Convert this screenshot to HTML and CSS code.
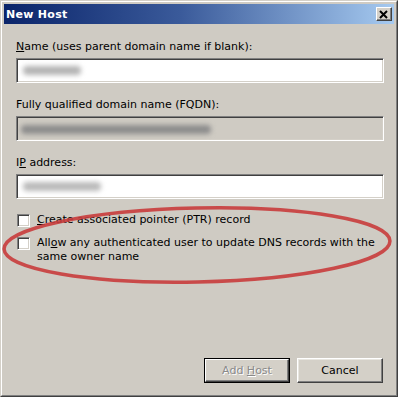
FILE: index.html
```html
<!DOCTYPE html>
<html>
<head>
<meta charset="utf-8">
<link rel="stylesheet" href="styles.css">
</head>
<body>
<div class="window">
  <div class="frame">
    <div class="titlebar">
      <span class="title">New Host</span>
      <span class="close">
        <svg width="10" height="9" viewBox="0 0 10 9"><path d="M1 1 L8 8 M8 1 L1 8" stroke="#000" stroke-width="2" fill="none"/></svg>
      </span>
    </div>
    <div class="content">
      <div class="label"><u>N</u>ame (uses parent domain name if blank):</div>
      <div class="input"><span class="blob blob1"></span></div>

      <div class="label">Fully qualified domain name (FQDN):</div>
      <div class="input disabled"><span class="blob blob2"></span></div>

      <div class="label">I<u>P</u> address:</div>
      <div class="input"><span class="blob blob3"></span></div>

      <div class="check-row first">
        <span class="checkbox"></span>
        <span class="check-label"><u>C</u>reate associated pointer (PTR) record</span>
      </div>
      <div class="check-row">
        <span class="checkbox"></span>
        <span class="check-label">All<u>o</u>w any authenticated user to update DNS records with the same owner name</span>
      </div>

      <div class="buttons">
        <span class="btn default"><span class="btn-inner dis"><span>Add <u>H</u>ost</span></span></span>
        <span class="btn"><span class="btn-inner"><span>Cancel</span></span></span>
      </div>
    </div>
  </div>
  <svg class="ellipse" width="400" height="400" viewBox="0 0 400 400">
    <ellipse cx="197" cy="245" rx="193" ry="37" transform="rotate(-1.2 197 245)" fill="none" stroke="#c83c3c" stroke-width="3.5" stroke-opacity="0.9"/>
  </svg>
</div>
</body>
</html>
```

FILE: styles.css
```css
* { box-sizing: border-box; }
html, body { margin: 0; padding: 0; background: #fff; }
body {
  font-family: "DejaVu Sans", Verdana, sans-serif;
  font-size: 11px;
  color: #000;
}
.window {
  position: relative;
  width: 398px;
  height: 397px;
  border: 1px solid;
  border-color: #d4d0c8 #404040 #404040 #d4d0c8;
  background: #d4d0c8;
}
.frame {
  height: 100%;
  border: 1px solid;
  border-color: #fff #808080 #808080 #fff;
  padding: 2px;
  display: flex;
  flex-direction: column;
  background: #cfcbc3;
}
.titlebar {
  height: 20px;
  background: linear-gradient(to right, #0a246a 0%, #3a5a9a 45%, #a6caf0 100%);
  display: flex;
  align-items: center;
  justify-content: space-between;
  padding: 0 2px 0 2px;
}
.title {
  color: #fff;
  font-weight: bold;
  font-size: 11px;
  letter-spacing: 0.3px;
}
.close {
  width: 16px;
  height: 14px;
  background: #d4d0c8;
  border: 1px solid;
  border-color: #fff #404040 #404040 #fff;
  box-shadow: inset -1px -1px #808080;
  display: flex;
  align-items: center;
  justify-content: center;
}
.content {
  flex: 1;
  display: flex;
  flex-direction: column;
  padding: 16px 10px 10px 12px;
}
.label {
  line-height: 14px;
  height: 14px;
  margin-bottom: 4px;
  white-space: nowrap;
}
.input {
  position: relative;
  height: 25px;
  width: 368px;
  background: #fff;
  border: 1px solid;
  border-color: #808080 #fff #fff #808080;
  box-shadow: inset 1px 1px #404040, inset -1px -1px #d4d0c8;
  margin-bottom: 15px;
}
.input.disabled { background: #cfcbc3; }
.blob {
  position: absolute;
  top: 7px;
  height: 9px;
  border-radius: 4px;
  filter: blur(2.5px);
  background: #9a9a9a;
}
.blob1 { left: 6px; width: 58px; background: #b4b4b4; }
.blob2 { left: 4px; width: 190px; top: 8px; background: #8c8c8c; }
.blob3 { left: 6px; width: 78px; background: #bababa; }

.check-row {
  display: flex;
  align-items: flex-start;
  gap: 7px;
  padding-left: 1px;
  line-height: 14px;
  margin-bottom: 9px;
}
.check-row.first { margin-top: -1px; }
.checkbox {
  flex: none;
  width: 13px;
  height: 13px;
  margin-top: 1px;
  background: #fff;
  border: 1px solid;
  border-color: #808080 #fff #fff #808080;
  box-shadow: inset 1px 1px #404040, inset -1px -1px #d4d0c8;
}
.check-label { width: 345px; }

.buttons {
  margin-top: auto;
  display: flex;
  justify-content: flex-end;
  gap: 7px;
  padding-right: 1px;
}
.btn {
  width: 86px;
  height: 25px;
  border: 1px solid;
  border-color: #fff #404040 #404040 #fff;
  box-shadow: inset -1px -1px #808080, inset 1px 1px #e8e6e0;
  background: #d4d0c8;
  display: flex;
}
.btn.default {
  border: 1px solid #000;
  box-shadow: none;
}
.btn-inner {
  flex: 1;
  display: flex;
  align-items: center;
  justify-content: center;
}
.btn.default .btn-inner {
  border: 1px solid;
  border-color: #fff #404040 #404040 #fff;
  box-shadow: inset -1px -1px #808080;
}
.btn-inner.dis {
  color: #8a8a8a;
  text-shadow: 1px 1px #fff;
}
.ellipse {
  position: absolute;
  left: -1px;
  top: -1px;
  pointer-events: none;
}
```
